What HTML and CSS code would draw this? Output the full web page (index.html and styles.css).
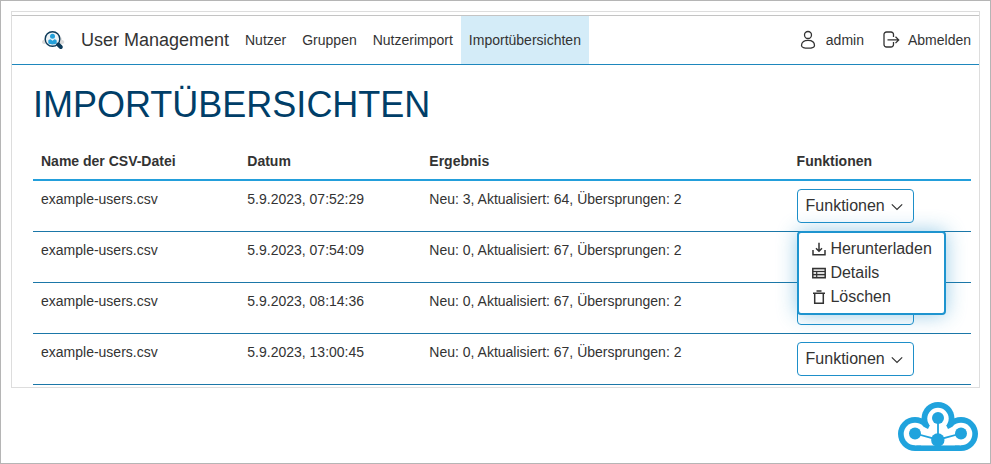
FILE: index.html
```html
<!DOCTYPE html>
<html lang="de">
<head>
<meta charset="utf-8">
<title>User Management</title>
<link rel="stylesheet" href="styles.css">
</head>
<body>
<div class="panel">
  <header class="navbar">
    <svg class="brand-icon" viewBox="0 0 24 20">
      <path d="M1 12c0-2 2-2 3-3 1-3 4-4 6-3h7c3 0 4 2 4 4 3 0 3 4 0 4H3c-1 0-2-1-2-2z" fill="#dcdcdc"/>
      <circle cx="11.500" cy="9" r="7.300" fill="#edf3f6" stroke="#0c3a59" stroke-width="1.400"/>
      <circle cx="11.500" cy="6.200" r="2.500" fill="#24a0da"/>
      <path d="M7.300 13.200V11c0-1 1-1.700 2.300-1.700l1.900 1.500 1.900-1.500c1.300 0 2.300.7 2.300 1.700v2.200c-2 1.600-6.400 1.600-8.400 0z" fill="#24a0da"/>
      <path d="M17.200 14.500l2.600 2.500" stroke="#0c3a59" stroke-width="4" stroke-linecap="round"/>
    </svg>
    <span class="brand">User Management</span>
    <nav class="links">
      <a>Nutzer</a><a>Gruppen</a><a>Nutzerimport</a><a class="active">Importübersichten</a>
    </nav>
    <div class="account">
      <svg class="user-icon" viewBox="0 0 16 20"><circle cx="8" cy="5" r="3.500"/><path d="M1.500 15.500C1.500 12 4.500 10.300 8 10.300s6.500 1.700 6.500 5.200c0 1.800-3 2.700-6.500 2.700s-6.500-.9-6.500-2.700z"/></svg>
      <span class="user">admin</span>
      <svg class="exit-icon" viewBox="0 0 18 20"><path d="M10.500 7V4.500a2.500 2.500 0 0 0-2.500-2.500H3.500A2.500 2.500 0 0 0 1 4.500v10A2.500 2.500 0 0 0 3.500 17H8a2.500 2.500 0 0 0 2.500-2.500V12M4.500 9.900h11M12.500 6.700l3.200 3.200-3.200 3.200"/></svg>
      <span>Abmelden</span>
    </div>
  </header>
  <main>
    <h1>IMPORTÜBERSICHTEN</h1>
    <table>
      <colgroup><col class="c-name"><col class="c-date"><col class="c-result"><col class="c-actions"></colgroup>
      <thead><tr><th>Name der CSV-Datei</th><th>Datum</th><th>Ergebnis</th><th>Funktionen</th></tr></thead>
      <tbody>
        <tr><td>example-users.csv</td><td>5.9.2023, 07:52:29</td><td>Neu: 3, Aktualisiert: 64, Übersprungen: 2</td><td>
          <div class="dropdown">
            <button>Funktionen<svg class="chevron" viewBox="0 0 12 8"><path d="M.8 1.300L6 6.500l5.200-5.200"/></svg></button>
            <ul class="menu">
              <li><svg viewBox="0 0 14 14"><path d="M1 8v4.700h12V8M7 .8v8M4 6.200l3 3 3-3"/></svg>Herunterladen</li>
              <li><svg viewBox="0 0 14 14"><path d="M.8 2.500h12.400v9.200H.8z" fill="#ddd"/><path d="M1 5.500h12M1 8.600h12M4.700 5.500v6" stroke-width="1.200"/></svg>Details</li>
              <li><svg viewBox="0 0 14 14"><path d="M1 3.300h12M2.700 3.500v9.700h8.600V3.500M4.500 1h5"/></svg>Löschen</li>
            </ul>
          </div></td></tr>
        <tr><td>example-users.csv</td><td>5.9.2023, 07:54:09</td><td>Neu: 0, Aktualisiert: 67, Übersprungen: 2</td><td><button aria-label="Funktionen"></button></td></tr>
        <tr><td>example-users.csv</td><td>5.9.2023, 08:14:36</td><td>Neu: 0, Aktualisiert: 67, Übersprungen: 2</td><td><button aria-label="Funktionen"></button></td></tr>
        <tr><td>example-users.csv</td><td>5.9.2023, 13:00:45</td><td>Neu: 0, Aktualisiert: 67, Übersprungen: 2</td><td><button>Funktionen<svg class="chevron" viewBox="0 0 12 8"><path d="M.8 1.300L6 6.500l5.200-5.200"/></svg></button></td></tr>
      </tbody>
    </table>
  </main>
</div>
<footer>
  <svg class="cloud" viewBox="0 0 80 49">
    <g fill="#20a3dd"><circle cx="17" cy="32" r="17"/><circle cx="40" cy="16.500" r="16.500"/><circle cx="63" cy="32" r="17"/><path d="M17 25h46v24H17z"/></g>
    <g fill="#fff"><circle cx="17" cy="32" r="11.300"/><circle cx="40" cy="16.500" r="10.700"/><circle cx="63" cy="32" r="11.300"/><path d="M32 23h16l2 4 4-2 3 18.300H23L26 25l4 2z"/><path d="M17 38h46v5.300H17z"/></g>
    <path d="M17 31.500L40 37.700 63 31.500M40 16v22" fill="none" stroke="#20a3dd" stroke-width="1.800"/>
    <g fill="#20a3dd"><circle cx="17" cy="31.500" r="6"/><circle cx="40" cy="16" r="6"/><circle cx="63" cy="31.500" r="6"/><circle cx="39.800" cy="38" r="6.700"/></g>
  </svg>
</footer>
</body>
</html>
```
FILE: styles.css
```css
* { box-sizing: border-box; }
body {
  margin: 0;
  height: 464px;
  padding: 10px 11px 0 10px;
  border: 1px solid #b5b5b5;
  background: #fff;
  color: #333;
  font: 14px/20px "Liberation Sans", Arial, sans-serif;
  overflow: hidden;
}
.panel { width: 969px; height: 377px; border: 1px solid #ddd; padding-top: 3px; background: #fff; }
.navbar {
  display: flex;
  align-items: center;
  height: 50px;
  padding: 0 8px 0 29px;
  border-top: 1px solid #c4c4c4;
  border-bottom: 1px solid #1e87bd;
}
.brand-icon { width: 24px; height: 20px; margin-right: 16px; flex: none; }
.brand { font-size: 18px; width: 148px; white-space: nowrap; }
.links { display: flex; align-self: stretch; margin-left: 8px; }
.links a { padding: 0 8px; line-height: 48px; }
.links .active { background: #d4ecf8; }
.account { display: flex; align-items: center; margin-left: auto; }
.user-icon, .exit-icon { height: 20px; fill: none; stroke: #333; stroke-width: 1.3; }
.user-icon { width: 16px; margin-right: 10px; }
.exit-icon { width: 18px; margin: 0 7px 0 19px; }
main { padding: 16px 8px 0 21px; }
h1 { margin: 0; height: 62px; font-size: 36px; line-height: 47px; font-weight: 400; color: #003e68; white-space: nowrap; }
table { width: 938px; border-collapse: separate; border-spacing: 0; table-layout: fixed; }
.c-name { width: 206.3px; }
.c-date { width: 182px; }
.c-result { width: 367.3px; }
th { height: 38px; padding: 8px; text-align: left; border-bottom: 2px solid #239fdb; }
td { height: 51px; padding: 8px; vertical-align: top; border-bottom: 1px solid #1b77a8; }
.dropdown { position: relative; }
button {
  display: flex;
  align-items: center;
  width: 117.3px;
  height: 34px;
  padding: 0 8px;
  border: 1px solid #1e8fc9;
  border-radius: 4px;
  background: #fff;
  color: #333;
  font: 16px/24px "Liberation Sans", Arial, sans-serif;
}
.chevron { width: 12px; height: 8px; margin: 2px 0 0 6px; fill: none; stroke: #333; stroke-width: 1.2; }
.menu {
  position: absolute;
  top: 42px;
  left: 0;
  z-index: 2;
  width: 149px;
  height: 84px;
  margin: 0;
  padding: 4px 0 4px 13.800px;
  list-style: none;
  background: #fff;
  border: 2px solid #1e94cf;
  border-radius: 4px;
  box-shadow: 0 0 20px rgba(30, 143, 201, .45);
  font-size: 16px;
  line-height: 24px;
}
.menu li { display: flex; align-items: center; }
.menu svg { width: 14px; height: 14px; margin: 0 4px 0 0; fill: none; stroke: #333; stroke-width: 1.500; }
footer { display: flex; justify-content: flex-end; padding: 14px 1px 0 0; }
.cloud { width: 80px; height: 49px; }
```
